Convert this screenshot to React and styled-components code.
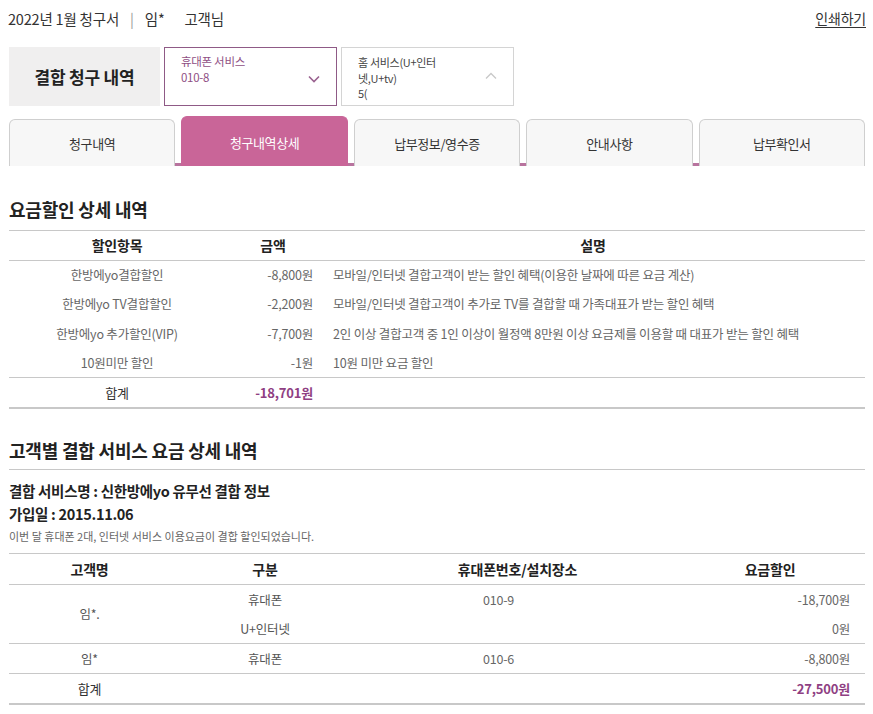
import React from 'react'
import styled, { createGlobalStyle } from 'styled-components'

const GlobalStyle = createGlobalStyle`
  html, body {
    margin: 0;
    padding: 0;
    background: #fff;
  }
  body {
    font-family: "Noto Sans CJK KR", "Noto Sans", sans-serif;
    color: #333;
  }
  * {
    box-sizing: border-box;
  }
`

const Page = styled.div`
  width: 873px;
  padding: 0 8px 0 9px;
`

const TopBar = styled.div`
  display: flex;
  align-items: center;
  justify-content: space-between;
  height: 36px;
  font-size: 14.5px;
  color: #333;
  letter-spacing: -0.2px;
`

const BillTitle = styled.div`
  display: flex;
  align-items: center;
  gap: 7px;
  margin-left: -1px;
`

const Divider = styled.span`
  color: #999;
  margin: 0 4px;
`

const CustomerSuffix = styled.span`
  margin-left: 13px;
`

const PrintLink = styled.a`
  color: #333;
  text-decoration: underline;
  text-underline-offset: 3px;
  cursor: pointer;
  font-size: 14px;
  margin-right: -1px;
`

const SelectRow = styled.div`
  display: flex;
  gap: 4px;
  margin-top: 11px;
  height: 59px;
`

const SelectLabel = styled.div`
  width: 151px;
  background: #f0efef;
  display: flex;
  align-items: center;
  justify-content: center;
  font-size: 17px;
  font-weight: 700;
  color: #222;
  letter-spacing: -0.2px;
`

const SelectBox = styled.div`
  width: 173px;
  border: 1px solid ${p => (p.$active ? '#8f5a86' : '#d4d4d4')};
  display: flex;
  align-items: center;
  justify-content: space-between;
  padding: 0 16px 0 16px;
`

const SelectText = styled.div`
  width: 90px;
  align-self: flex-start;
  padding-top: ${p => (p.$active ? '6px' : '7px')};
  font-size: ${p => (p.$active ? '11.5px' : '11px')};
  line-height: 15.5px;
  color: ${p => (p.$active ? '#8f4f84' : '#444')};
  letter-spacing: -0.3px;
`

const Chevron = styled.svg`
  width: 12px;
  height: 8px;
  margin-top: ${p => (p.$up ? '-2px' : '4px')};
`

const Tabs = styled.div`
  display: grid;
  grid-template-columns: repeat(5, 1fr);
  gap: 6px;
  margin-top: 10px;
  height: 50px;
  align-items: end;
  border-bottom: 3px solid #b8739e;
`

const Tab = styled.div`
  height: ${p => (p.$active ? '50px' : '47px')};
  border: 1px solid ${p => (p.$active ? '#c96598' : '#cfcfcf')};
  border-bottom: none;
  border-radius: 6px 6px 0 0;
  background: ${p => (p.$active ? '#c96598' : '#f7f7f7')};
  color: ${p => (p.$active ? '#fff' : '#333')};
  display: flex;
  align-items: center;
  justify-content: center;
  padding-top: ${p => (p.$active ? '1px' : '0')};
  font-size: 13px;
  letter-spacing: -0.4px;
`

const SectionTitle = styled.h2`
  margin: 0;
  font-size: 18px;
  font-weight: 700;
  color: #222;
  letter-spacing: -0.2px;
  line-height: 24px;
  padding-top: ${p => p.$top || '31px'};
  padding-bottom: ${p => p.$bottom || '9px'};
`

const Table = styled.table`
  width: 100%;
  border-collapse: collapse;
  table-layout: fixed;
  border-top: 1px solid #c8c8c8;
  border-bottom: 2px solid #c8c8c8;
  font-size: 12.5px;
  color: #666;
  letter-spacing: -0.2px;
`

const Th = styled.th`
  height: ${p => p.$h || '29.5px'};
  padding: 0;
  font-size: 14px;
  font-weight: 700;
  color: #222;
  text-align: center;
  border-bottom: 1px solid #c8c8c8;
`

const Td = styled.td`
  height: ${p => p.$h || '29.25px'};
  padding: ${p => p.$pad || '0'};
  text-align: ${p => p.$align || 'center'};
  vertical-align: middle;
  white-space: nowrap;
  color: ${p => (p.$total ? '#8f3f83' : p.$dark ? '#555' : '#666')};
  font-size: ${p => (p.$total ? '13px' : '12.5px')};
  font-weight: ${p => (p.$total ? 700 : 400)};
  border-top: ${p => (p.$line ? '1px solid #c8c8c8' : 'none')};
`

const TotalLabel = styled(Td)`
  font-size: 13px;
  color: #333;
`

const InfoBlock = styled.div`
  border-top: 1px solid #c8c8c8;
  padding: 9px 0 6px;
`

const InfoLine = styled.div`
  font-size: 14.5px;
  font-weight: 700;
  color: #222;
  line-height: 23px;
  letter-spacing: -0.3px;
`

const Note = styled.div`
  font-size: 11px;
  color: #666;
  line-height: 22px;
  letter-spacing: 0;
`

const ChevronDown = () => (
  <Chevron viewBox="0 0 12 8">
    <path d="M1 1.5 L6 6.5 L11 1.5" fill="none" stroke="#9a6290" strokeWidth="1.6" />
  </Chevron>
)

const ChevronUp = () => (
  <Chevron viewBox="0 0 12 8" $up>
    <path d="M1 6.5 L6 1.5 L11 6.5" fill="none" stroke="#c8c8c8" strokeWidth="1.3" />
  </Chevron>
)

const discounts = [
  { item: '한방에yo결합할인', amount: '-8,800원', desc: '모바일/인터넷 결합고객이 받는 할인 혜택(이용한 날짜에 따른 요금 계산)' },
  { item: '한방에yo TV결합할인', amount: '-2,200원', desc: '모바일/인터넷 결합고객이 추가로 TV를 결합할 때 가족대표가 받는 할인 혜택' },
  { item: '한방에yo 추가할인(VIP)', amount: '-7,700원', desc: '2인 이상 결합고객 중 1인 이상이 월정액 8만원 이상 요금제를 이용할 때 대표가 받는 할인 혜택' },
  { item: '10원미만 할인', amount: '-1원', desc: '10원 미만 요금 할인' }
]

const tabs = ['청구내역', '청구내역상세', '납부정보/영수증', '안내사항', '납부확인서']

const App = () => {
  return (
    <Page>
      <GlobalStyle />
      <TopBar>
        <BillTitle>
          <span>2022년 1월 청구서</span>
          <Divider>|</Divider>
          <span>임*</span>
          <CustomerSuffix>고객님</CustomerSuffix>
        </BillTitle>
        <PrintLink>인쇄하기</PrintLink>
      </TopBar>

      <SelectRow>
        <SelectLabel>결합 청구 내역</SelectLabel>
        <SelectBox $active>
          <SelectText $active>
            휴대폰 서비스
            <br />
            010-8
          </SelectText>
          <ChevronDown />
        </SelectBox>
        <SelectBox>
          <SelectText>
            홈 서비스(U+인터넷,U+tv)
            <br />
            5(
          </SelectText>
          <ChevronUp />
        </SelectBox>
      </SelectRow>

      <Tabs>
        {tabs.map((t, i) => (
          <Tab key={t} $active={i === 1}>
            {t}
          </Tab>
        ))}
      </Tabs>

      <SectionTitle>요금할인 상세 내역</SectionTitle>
      <Table>
        <colgroup>
          <col style={{ width: 216 }} />
          <col style={{ width: 96 }} />
          <col />
        </colgroup>
        <thead>
          <tr>
            <Th>할인항목</Th>
            <Th>금액</Th>
            <Th>설명</Th>
          </tr>
        </thead>
        <tbody>
          {discounts.map(d => (
            <tr key={d.item}>
              <Td>{d.item}</Td>
              <Td $align="right" $pad="0 8px 0 0">{d.amount}</Td>
              <Td $align="left" $pad="0 0 0 12px">{d.desc}</Td>
            </tr>
          ))}
          <tr>
            <TotalLabel $line $h="30.5px">합계</TotalLabel>
            <Td $line $total $h="30.5px" $align="right" $pad="0 8px 0 0">-18,701원</Td>
            <Td $line $h="30.5px" />
          </tr>
        </tbody>
      </Table>

      <SectionTitle $top="29px" $bottom="7px">고객별 결합 서비스 요금 상세 내역</SectionTitle>
      <InfoBlock>
        <InfoLine>결합 서비스명 : 신한방에yo 유무선 결합 정보</InfoLine>
        <InfoLine>가입일 : 2015.11.06</InfoLine>
        <Note>이번 달 휴대폰 2대, 인터넷 서비스 이용요금이 결합 할인되었습니다.</Note>
      </InfoBlock>
      <Table>
        <colgroup>
          <col style={{ width: 161 }} />
          <col style={{ width: 190 }} />
          <col style={{ width: 315 }} />
          <col />
        </colgroup>
        <thead>
          <tr>
            <Th $h="31px">고객명</Th>
            <Th $h="31px">구분</Th>
            <Th $h="31px">휴대폰번호/설치장소</Th>
            <Th $h="31px">요금할인</Th>
          </tr>
        </thead>
        <tbody>
          <tr>
            <Td rowSpan={2} $dark>임*.</Td>
            <Td $dark $h="29.5px">휴대폰</Td>
            <Td $h="29.5px" $align="left" $pad="0 0 0 123px">010-9</Td>
            <Td $h="29.5px" $align="right" $pad="0 15px 0 0">-18,700원</Td>
          </tr>
          <tr>
            <Td $dark $h="29.5px">U+인터넷</Td>
            <Td $h="29.5px" />
            <Td $h="29.5px" $align="right" $pad="0 15px 0 0">0원</Td>
          </tr>
          <tr>
            <Td $line $h="30.5px" $dark>임*</Td>
            <Td $line $h="30.5px" $dark>휴대폰</Td>
            <Td $line $h="30.5px" $align="left" $pad="0 0 0 123px">010-6</Td>
            <Td $line $h="30.5px" $align="right" $pad="0 15px 0 0">-8,800원</Td>
          </tr>
          <tr>
            <TotalLabel $line $h="30.5px">합계</TotalLabel>
            <Td $line $h="30.5px" />
            <Td $line $h="30.5px" />
            <Td $line $total $h="30.5px" $align="right" $pad="0 15px 0 0">-27,500원</Td>
          </tr>
        </tbody>
      </Table>
    </Page>
  )
}

export default App
